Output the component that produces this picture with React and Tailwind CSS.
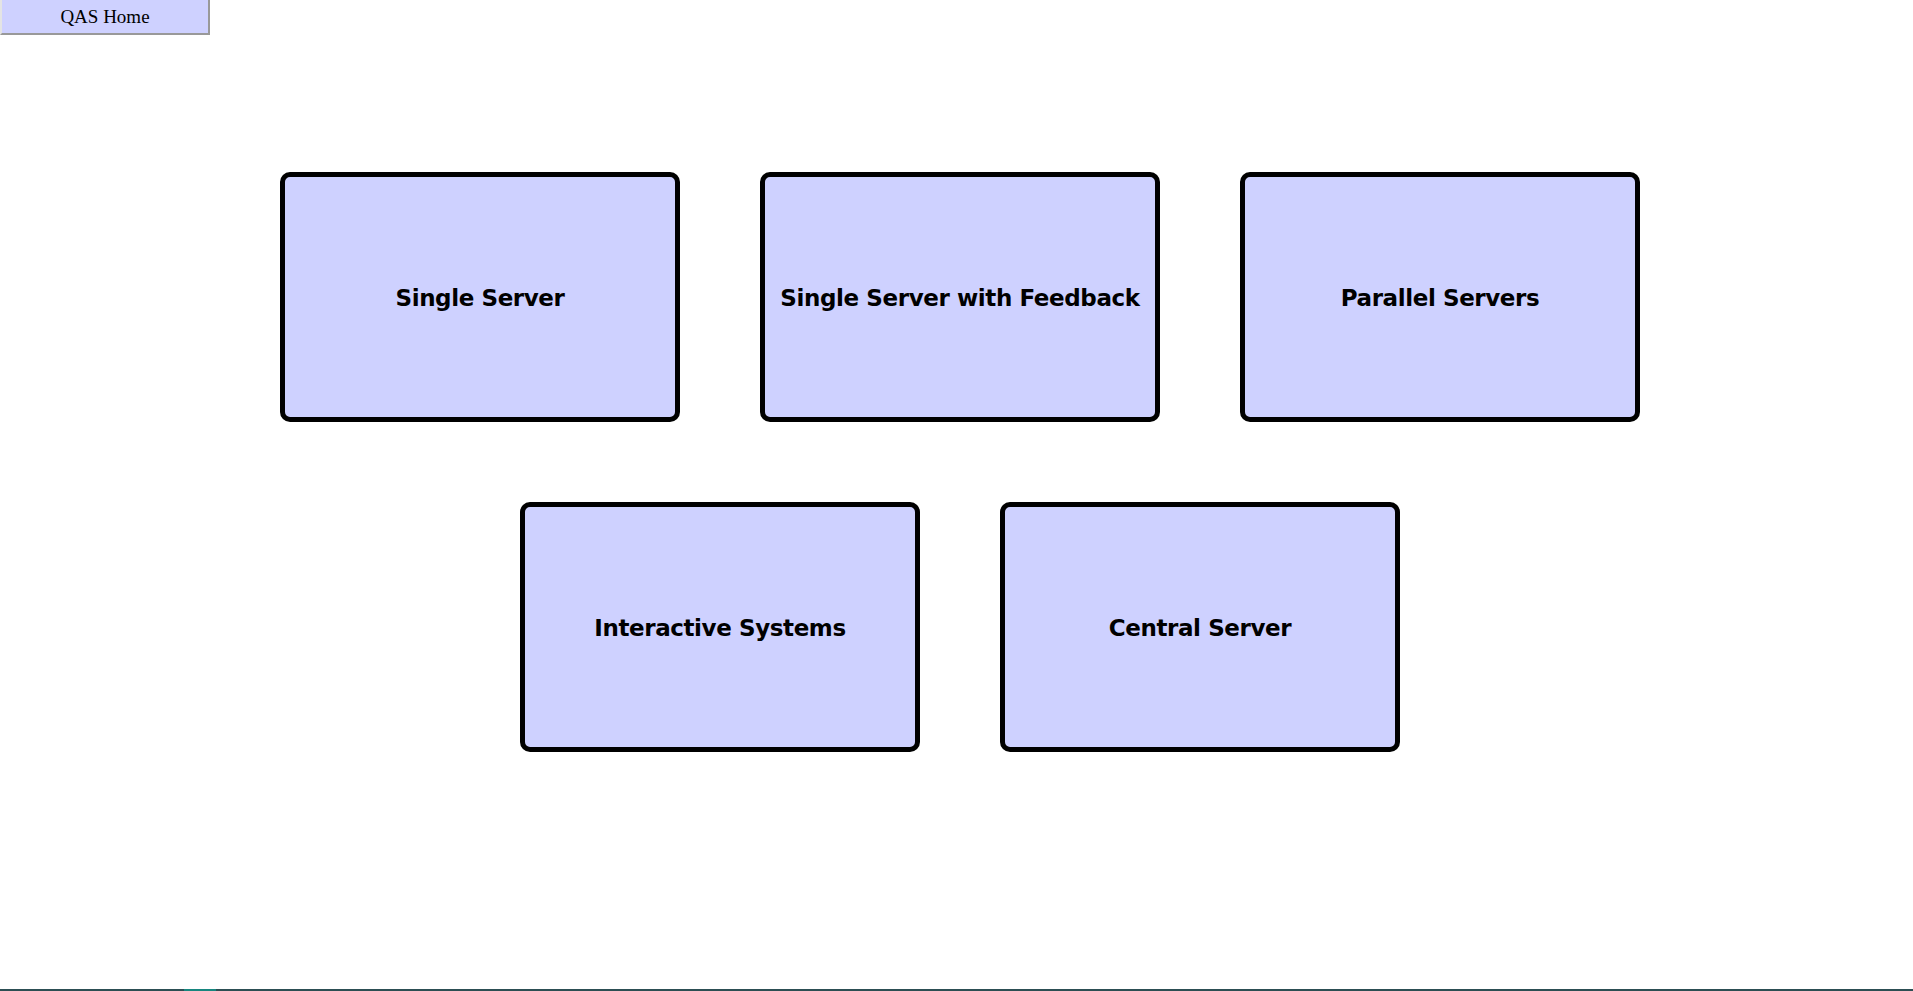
export default function App() {
  const row1 = ["Single Server", "Single Server with Feedback", "Parallel Servers"];
  const row2 = ["Interactive Systems", "Central Server"];
  const Card = ({ label }) => (
    <div className="w-[400px] h-[250px] box-border border-[5px] border-black rounded-[10px] bg-[#ced1ff] flex items-center justify-center pt-[2px]">
      <span
        className="font-bold text-[23px] text-black tracking-[-0.4px]"
        style={{ fontFamily: '"DejaVu Sans", Verdana, sans-serif' }}
      >
        {label}
      </span>
    </div>
  );
  return (
    <div className="min-h-screen bg-white">
      <div
        className="w-[210px] h-[35px] box-border bg-[#ced1ff] border-l-[2px] border-l-[#e4e4e4] border-r-[2px] border-b-[2px] border-r-[#999999] border-b-[#999999] flex items-center justify-center pt-[2px] text-[19px] text-black"
        style={{ fontFamily: '"Liberation Serif", "Times New Roman", serif' }}
      >
        QAS Home
      </div>
      <div className="pt-[137px] pl-[7px] flex flex-col items-center gap-[80px]">
        <div className="flex gap-[80px]">
          {row1.map((l) => (
            <Card key={l} label={l} />
          ))}
        </div>
        <div className="flex gap-[80px]">
          {row2.map((l) => (
            <Card key={l} label={l} />
          ))}
        </div>
      </div>
      <div className="fixed bottom-0 left-0 right-0 h-[2px] bg-[#2c4e53] flex">
        <div className="ml-[184px] w-[32px] h-full bg-[#17867f]" />
      </div>
    </div>
  );
}
